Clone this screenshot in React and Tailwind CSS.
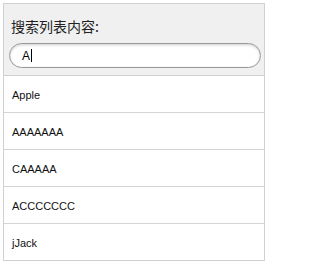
const items = ["Apple", "AAAAAAA", "CAAAAA", "ACCCCCCC", "jJack"]

export default function App() {
  return (
    <div className="w-[268px] h-[264px] bg-white p-[3px] font-['Liberation_Sans',Arial,sans-serif]">
      <div className="w-[262px] h-[258px] border border-[#d0d0d0] flex flex-col">
        <div className="h-[72px] shrink-0 bg-[#f0f0f0] border-b border-[#d0d0d0]">
          <div className="pt-[12px] pl-[7px] h-[32px] text-[14px] leading-[20px] text-[#222] font-['Noto_Sans_CJK_SC','Liberation_Sans',sans-serif]">
            搜索列表内容:
          </div>
          <div className="mt-[7px] ml-[5px] w-[252px] h-[25px] rounded-full border border-[#9a9a9a] bg-white shadow-[inset_0_1px_3px_rgba(0,0,0,0.2)] flex items-center pl-[12px] text-[12px] text-black">
            <span>A</span>
            <span className="w-px h-[13px] bg-black ml-px" />
          </div>
        </div>
        {items.map((item, i) => (
          <div
            key={i}
            className={
              "shrink-0 flex items-center pl-[8px] pt-[3px] text-[11px] text-[#111] " +
              (i < items.length - 1 ? "h-[37px] border-b border-[#d4d4d4]" : "h-[36px]")
            }
          >
            {item}
          </div>
        ))}
      </div>
    </div>
  )
}
